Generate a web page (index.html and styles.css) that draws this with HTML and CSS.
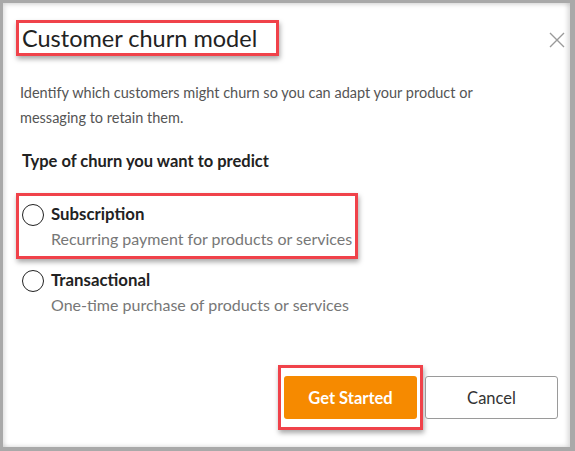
FILE: index.html
```html
<!DOCTYPE html>
<html>
<head>
<meta charset="utf-8">
<link rel="stylesheet" href="styles.css">
</head>
<body>
<div class="frame">
  <div class="dialog">
    <div class="header">
      <div class="hl title-box"><h1 class="title">Customer churn model</h1></div>
      <button class="close" aria-label="Close">
        <svg width="16" height="16" viewBox="0 0 16 16"><path d="M1 1L15 15M15 1L1 15" stroke="#9a9a9a" stroke-width="1.4" fill="none"/></svg>
      </button>
    </div>
    <p class="desc">Identify which customers might churn so you can adapt your product or messaging to retain them.</p>
    <div class="section-label">Type of churn you want to predict</div>
    <div class="options">
      <div class="hl option-box">
        <label class="option">
          <span class="radio"></span>
          <span class="option-text">
            <span class="option-name">Subscription</span>
            <span class="option-sub">Recurring payment for products or services</span>
          </span>
        </label>
      </div>
      <label class="option plain">
        <span class="radio"></span>
        <span class="option-text">
          <span class="option-name">Transactional</span>
          <span class="option-sub">One-time purchase of products or services</span>
        </span>
      </label>
    </div>
    <div class="footer">
      <div class="hl btn-box"><button class="btn primary">Get Started</button></div>
      <button class="btn secondary">Cancel</button>
    </div>
  </div>
</div>
</body>
</html>
```
FILE: styles.css
```css
html, body {
  margin: 0;
  padding: 0;
  background: #a9a9a9;
}
body {
  font-family: Lato, "Open Sans", sans-serif;
  color: #222;
}
.frame {
  width: 575px;
  height: 451px;
  box-sizing: border-box;
  padding: 3px 5px 4px 3px;
  background: #a9a9a9;
}
.dialog {
  background: #fff;
  height: 100%;
  box-sizing: border-box;
  box-shadow: inset 2px 2px 4px rgba(0,0,0,0.12), inset -3px -1px 4px rgba(0,0,0,0.12);
  padding: 17px 0 0 13px;
  display: flex;
  flex-direction: column;
}
.hl {
  border: 3px solid #f0424a;
  box-shadow: 1px 3px 5px rgba(0,0,0,0.35);
}
.header {
  display: flex;
  justify-content: space-between;
  align-items: flex-start;
  padding-right: 5px;
}
.title-box {
  width: 254px;
  height: 30px;
  padding-left: 3px;
}
.title {
  margin: 0;
  font-size: 23.5px;
  font-weight: 400;
  line-height: 30px;
  color: #222;
}
.close {
  background: none;
  border: 0;
  padding: 0;
  margin-top: 12px;
  width: 16px;
  height: 16px;
}
.close svg { display: block; }
.desc {
  margin: 24px 0 0 4px;
  font-size: 14.5px;
  line-height: 25px;
  color: #555;
  width: 500px;
}
.section-label {
  margin: 21px 0 0 6px;
  font-size: 16.5px;
  font-weight: 700;
  line-height: 20px;
  color: #222;
}
.options {
  margin-top: 22px;
  display: flex;
  flex-direction: column;
}
.option-box {
  width: 336px;
  height: 60px;
}
.option {
  display: flex;
  gap: 7px;
  align-items: flex-start;
  padding: 7px 0 0 3px;
  white-space: nowrap;
}
.option.plain { padding: 10px 0 0 6px; }
.radio {
  width: 22px;
  height: 22px;
  margin-top: 1px;
  border: 1.3px solid #222;
  border-radius: 50%;
  box-sizing: border-box;
  flex: none;
}
.option-text {
  display: flex;
  flex-direction: column;
}
.option-name {
  font-size: 16.8px;
  font-weight: 700;
  line-height: 22px;
  color: #222;
}
.option-sub {
  font-size: 16px;
  line-height: 28px;
  color: #777;
}
.footer {
  margin-top: auto;
  margin-bottom: 17px;
  display: flex;
  gap: 2px;
  justify-content: flex-end;
  align-items: center;
  padding-right: 12px;
}
.btn-box {
  padding: 8px 3px;
}
.btn {
  width: 133px;
  height: 43px;
  font-family: Lato, "Open Sans", sans-serif;
  font-size: 16.5px;
  border-radius: 3px;
  cursor: pointer;
}
.primary {
  background: #f68a00;
  color: #fff;
  border: 0;
  font-weight: 700;
}
.secondary {
  background: #fff;
  color: #333;
  border: 1px solid #9a9a9a;
}
```
